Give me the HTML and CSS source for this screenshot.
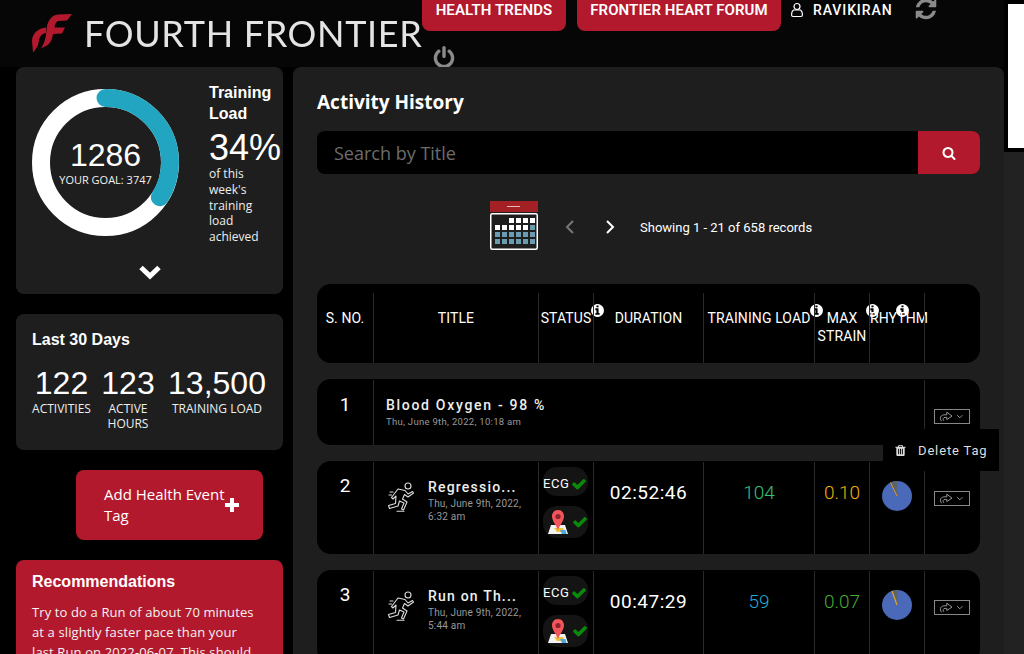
FILE: index.html
```html
<!DOCTYPE html>
<html lang="en">
<head>
  <meta charset="UTF-8">
  <title>Fourth Frontier - Activity History</title>
  <link rel="stylesheet" href="styles.css">
</head>
<body>
  <svg class="icon-defs" width="0" height="0">
    <symbol id="i-refresh" viewBox="0 0 1792 1792"><path d="M1639 1056q0 5-1 7-64 268-268 434.5t-478 166.5q-146 0-282.5-55t-243.5-157l-129 129q-19 19-45 19t-45-19-19-45v-448q0-26 19-45t45-19h448q26 0 45 19t19 45-19 45l-137 137q71 66 161 102t187 36q134 0 250-65t186-179q11-17 53-117 8-23 30-23h192q13 0 22.5 9.5t9.5 22.5zm25-800v448q0 26-19 45t-45 19h-448q-26 0-45-19t-19-45 19-45l138-138q-148-137-349-137-134 0-250 65t-186 179q-11 17-53 117-8 23-30 23h-199q-13 0-22.5-9.5t-9.5-22.5v-7q65-268 270-434.5t480-166.5q146 0 284 55.5t245 156.5l130-129q19-19 45-19t45 19 19 45z"/></symbol>
    <symbol id="i-power" viewBox="0 0 1792 1792"><path d="M1664 896q0 156-61 298t-164 245-245 164-298 61-298-61-245-164-164-245-61-298q0-182 80.5-343t226.5-270q43-32 95.5-25t83.5 50q32 42 24.5 94.5t-49.5 84.5q-98 74-151.5 181t-53.5 228q0 104 40.5 198.5t109.5 163.5 163.5 109.5 198.5 40.5 198.5-40.5 163.5-109.5 109.5-163.5 40.5-198.5q0-121-53.5-228t-151.5-181q-42-32-49.5-84.5t24.5-94.5q31-43 84-50t95 25q146 109 226.5 270t80.5 343zm-640-768v640q0 52-38 90t-90 38-90-38-38-90v-640q0-52 38-90t90-38 90 38 38 90z"/></symbol>
    <symbol id="i-search" viewBox="0 0 1792 1792"><path d="M1216 832q0-185-131.5-316.5t-316.5-131.5-316.5 131.5-131.5 316.5 131.5 316.5 316.5 131.5 316.5-131.5 131.5-316.5zm512 832q0 52-38 90t-90 38q-54 0-90-38l-343-342q-179 124-399 124-143 0-273.5-55.5t-225-150-150-225-55.5-273.5 55.5-273.5 150-225 225-150 273.5-55.5 273.5 55.5 225 150 150 225 55.5 273.5q0 220-124 399l343 343q37 37 37 90z"/></symbol>
    <symbol id="i-info" viewBox="0 0 1792 1792"><path d="M1152 1376v-160q0-14-9-23t-23-9h-96v-512q0-14-9-23t-23-9h-320q-14 0-23 9t-9 23v160q0 14 9 23t23 9h96v320h-96q-14 0-23 9t-9 23v160q0 14 9 23t23 9h448q14 0 23-9t9-23zm-128-896v-160q0-14-9-23t-23-9h-192q-14 0-23 9t-9 23v160q0 14 9 23t23 9h192q14 0 23-9t9-23zm640 416q0 209-103 385.5t-279.5 279.5-385.5 103-385.5-103-279.5-279.5-103-385.5 103-385.5 279.5-279.5 385.5-103 385.5 103 279.5 279.5 103 385.5z"/></symbol>
    <symbol id="i-check" viewBox="0 0 1792 1792"><path d="M1671 566q0 40-28 68l-724 724-136 136q-28 28-68 28t-68-28l-136-136-362-362q-28-28-28-68t28-68l136-136q28-28 68-28t68 28l294 295 656-657q28-28 68-28t68 28l136 136q28 28 28 68z"/></symbol>
    <symbol id="i-trash" viewBox="0 0 1792 1792"><path d="M704 1376v-704q0-14-9-23t-23-9h-64q-14 0-23 9t-9 23v704q0 14 9 23t23 9h64q14 0 23-9t9-23zm256 0v-704q0-14-9-23t-23-9h-64q-14 0-23 9t-9 23v704q0 14 9 23t23 9h64q14 0 23-9t9-23zm256 0v-704q0-14-9-23t-23-9h-64q-14 0-23 9t-9 23v704q0 14 9 23t23 9h64q14 0 23-9t9-23zm-544-992h448l-48-117q-7-9-17-11h-317q-10 2-17 11zm928 32v64q0 14-9 23t-23 9h-96v948q0 83-47 143.5t-113 60.5h-832q-66 0-113-58.5t-47-141.5v-952h-96q-14 0-23-9t-9-23v-64q0-14 9-23t23-9h309l70-167q15-37 54-63t79-26h320q40 0 79 26t54 63l70 167h309q14 0 23 9t9 23z"/></symbol>
    <symbol id="i-share" viewBox="0 0 36 15">
      <path d="M6 13 C3 9 5 5.500 10 5.500 H12 V2.500 L18 7 L12 11 V8.500 H10 C8 8.500 7 10 8.500 12.500" fill="none" stroke="#aaa" stroke-width="1"/>
      <path d="M24 6 L27 9 L30 6" fill="none" stroke="#aaa" stroke-width="1"/>
    </symbol>
    <symbol id="i-runner" viewBox="0 0 26 30">
      <g fill="none" stroke="#ddd" stroke-width="1.100" stroke-linejoin="round" stroke-linecap="round">
        <circle cx="20" cy="4" r="3"/>
        <path d="M10 7 L17 8.500 L20 12 L24.500 9.500 L25.500 11 L20 15 L16.500 12.500 L14.500 17 L19 20 L15.500 28 L13.500 27 L16 21 L11.500 19 L10 24 L1.500 26.500 L0.500 23.500 L7.500 21.500 L8 14 L5 17 L3.500 15.500 Z"/>
        <path d="M9 29.300 H16 M2 10 H5 M1 13 H3.500"/>
      </g>
    </symbol>
    <symbol id="i-map" viewBox="0 0 20 25">
      <path d="M3 15 H17 L20 24 H0 Z" fill="#f3f3f3"/>
      <path d="M6 18 H15 L17 22 H9 Z" fill="#f2c23a"/>
      <path d="M12 20 H17.500 L18.500 24 H14 Z" fill="#4fa8dc"/>
      <path d="M10 0 C5.500 0 4 3.500 4 6.500 C4 10.500 8 15 10 20 C12 15 16 10.500 16 6.500 C16 3.500 14.500 0 10 0 Z" fill="#f2555a"/>
      <circle cx="10" cy="6.500" r="2.600" fill="#8c2430"/>
    </symbol>
  </svg>

  <div class="app">
    <div class="page">
      <header class="topbar">
        <div class="brand">
          <svg class="brand-mark" viewBox="0 0 40 40" width="40" height="40">
            <path fill="#b2192d" d="M40 0 L35 6.500 L26 7 C24 8 23 10 22.500 13.500 L33 13.500 L30 19.500 L21 20 C20 26 18 32 9 34 C13 29 14 22 14.500 16 C15 8 19 1 26 0.500 Z"/>
            <path fill="#b2192d" d="M1 38.500 L0 27 C0 20 6 14 14 13.500 L14 19 C10 19.500 8 22 7 26 C6.500 30 6 33 1 38.500 Z"/>
          </svg>
          <span class="brand-name">FOURTH FRONTIER</span>
        </div>
        <nav class="topnav">
          <a class="nav-btn nav-health">HEALTH TRENDS</a>
          <a class="nav-btn nav-forum">FRONTIER HEART FORUM</a>
          <span class="user">
            <svg class="user-icon" viewBox="0 0 12 16" width="12" height="16"><circle cx="6" cy="4.500" r="3" fill="none" stroke="#fff" stroke-width="1.200"/><path d="M2.500 8 H9.500 C10.800 9 11.400 10.500 11.400 12 V13 C11.400 14 10.800 14.500 10 14.500 H2 C1.200 14.500 0.600 14 0.600 13 V12 C0.600 10.500 1.200 9 2.500 8 Z" fill="none" stroke="#fff" stroke-width="1.200"/></svg>
            RAVIKIRAN
          </span>
          <svg class="refresh-icon"><use href="#i-refresh"/></svg>
          <svg class="power-icon"><use href="#i-power"/></svg>
        </nav>
      </header>

      <div class="content">
        <aside class="sidebar">
          <section class="card load-card">
            <div class="load-top">
              <div class="ring">
                <svg viewBox="0 0 147 147" width="147" height="147">
                  <circle cx="73.500" cy="73.500" r="64.500" fill="none" stroke="#fff" stroke-width="18"/>
                  <circle cx="73.500" cy="73.500" r="64.500" fill="none" stroke="#22a5c0" stroke-width="18" stroke-linecap="round" stroke-dasharray="137.800 405.300" transform="rotate(-90 73.500 73.500)"/>
                </svg>
                <div class="ring-text">
                  <div class="ring-value">1286</div>
                  <div class="ring-goal">YOUR GOAL: 3747</div>
                </div>
              </div>
              <div class="load-info">
                <h3 class="card-title">Training Load</h3>
                <div class="load-pct">34%</div>
                <p class="load-note">of this week's training load achieved</p>
              </div>
            </div>
            <svg class="chevron-down" viewBox="0 0 24 16" width="24" height="16"><path d="M3 3.500 L12 12 L21 3.500" fill="none" stroke="#fff" stroke-width="5"/></svg>
          </section>

          <section class="card days-card">
            <h3 class="card-title">Last 30 Days</h3>
            <div class="days-stats">
              <div class="stat stat-a"><div class="stat-value">122</div><div class="stat-label">ACTIVITIES</div></div>
              <div class="stat stat-b"><div class="stat-value">123</div><div class="stat-label">ACTIVE HOURS</div></div>
              <div class="stat stat-c"><div class="stat-value">13,500</div><div class="stat-label">TRAINING LOAD</div></div>
            </div>
          </section>

          <a class="add-btn">
            <span>Add Health Event Tag</span>
            <svg class="add-plus" viewBox="0 0 14 14" width="14" height="14"><path d="M5 0 H9 V5 H14 V9 H9 V14 H5 V9 H0 V5 H5 Z" fill="#fff"/></svg>
          </a>

          <section class="card reco-card">
            <h3 class="card-title">Recommendations</h3>
            <p class="reco-text">Try to do a Run of about 70 minutes at a slightly faster pace than your last Run on 2022-06-07. This should help you build on your load.</p>
          </section>
        </aside>

        <main class="history">
          <h2 class="history-title">Activity History</h2>
          <div class="search">
            <div class="search-input">Search by Title</div>
            <div class="search-btn"><svg><use href="#i-search"/></svg></div>
          </div>
          <div class="pager">
            <svg class="calendar" viewBox="0 0 48 49" width="48" height="49">
              <rect x="0" y="0" width="48" height="11" fill="#a32025"/>
              <rect x="17" y="5" width="13" height="1" fill="#e8b9bb"/>
              <rect x="0.750" y="12.750" width="46.500" height="35.500" rx="1.500" fill="none" stroke="#fff" stroke-width="1.500"/>
              <g fill="#fff">
                <rect x="19" y="17" width="5" height="5"/><rect x="26" y="17" width="5" height="5"/><rect x="33" y="17" width="5" height="5"/><rect x="40" y="17" width="5" height="5"/>
                <rect x="5" y="24" width="5" height="5"/><rect x="12" y="24" width="5" height="5"/><rect x="19" y="24" width="5" height="5"/><rect x="26" y="24" width="5" height="5"/><rect x="33" y="24" width="5" height="5"/>
              </g>
              <g fill="#6b9bb0">
                <rect x="40" y="24" width="5" height="5"/>
                <rect x="5" y="31" width="5" height="5"/><rect x="12" y="31" width="5" height="5"/><rect x="19" y="31" width="5" height="5"/><rect x="26" y="31" width="5" height="5"/><rect x="33" y="31" width="5" height="5"/><rect x="40" y="31" width="5" height="5"/>
                <rect x="5" y="38" width="5" height="5"/><rect x="12" y="38" width="5" height="5"/><rect x="19" y="38" width="5" height="5"/><rect x="26" y="38" width="5" height="5"/><rect x="33" y="38" width="5" height="5"/><rect x="40" y="38" width="5" height="5"/>
              </g>
            </svg>
            <svg class="pager-arrow" viewBox="0 0 10 14" width="10" height="14"><path d="M8 1 L2 7 L8 13" fill="none" stroke="#777" stroke-width="2"/></svg>
            <svg class="pager-arrow" viewBox="0 0 10 14" width="10" height="14"><path d="M2 1 L8 7 L2 13" fill="none" stroke="#fff" stroke-width="2"/></svg>
            <span class="pager-text">Showing 1 - 21 of 658 records</span>
          </div>

          <div class="table">
            <div class="row row-head">
              <div class="cell">S. NO.</div>
              <div class="cell">TITLE</div>
              <div class="cell">STATUS<svg class="info info-status"><use href="#i-info"/></svg></div>
              <div class="cell">DURATION</div>
              <div class="cell">TRAINING LOAD<svg class="info info-load"><use href="#i-info"/></svg></div>
              <div class="cell">MAX STRAIN<svg class="info info-strain"><use href="#i-info"/></svg></div>
              <div class="cell">RHYTHM<svg class="info info-rhythm"><use href="#i-info"/></svg></div>
              <div class="cell"></div>
            </div>

            <div class="row row-tag">
              <div class="cell cell-num">1</div>
              <div class="cell cell-tag">
                <div class="tag-title">Blood Oxygen - 98 %</div>
                <div class="tag-date">Thu, June 9th, 2022, 10:18 am</div>
              </div>
              <div class="cell cell-share"><svg class="share"><use href="#i-share"/></svg></div>
            </div>

            <div class="row row-activity">
              <div class="cell cell-num">2</div>
              <div class="cell cell-title">
                <svg class="runner"><use href="#i-runner"/></svg>
                <div>
                  <div class="act-title">Regressio...</div>
                  <div class="act-date">Thu, June 9th, 2022, 6:32 am</div>
                </div>
              </div>
              <div class="cell cell-status">
                <div class="chip">ECG<svg class="check"><use href="#i-check"/></svg></div>
                <div class="chip chip-map"><svg class="map"><use href="#i-map"/></svg><svg class="check"><use href="#i-check"/></svg></div>
              </div>
              <div class="cell cell-big">02:52:46</div>
              <div class="cell cell-big cell-metric c-green">104</div>
              <div class="cell cell-big cell-metric c-amber">0.10</div>
              <div class="cell cell-pie">
                <svg viewBox="0 0 30 30" width="30" height="30"><circle cx="15" cy="15" r="15" fill="#4a69b8"/><path d="M15 15 L8.500 1.500 A15 15 0 0 1 15.500 0 Z" fill="#5d6468"/><path d="M15 15 L8.500 1.500" stroke="#e0952a" stroke-width="1"/></svg>
              </div>
              <div class="cell cell-share"><svg class="share"><use href="#i-share"/></svg></div>
            </div>

            <div class="row row-activity">
              <div class="cell cell-num">3</div>
              <div class="cell cell-title">
                <svg class="runner"><use href="#i-runner"/></svg>
                <div>
                  <div class="act-title">Run on Th...</div>
                  <div class="act-date">Thu, June 9th, 2022, 5:44 am</div>
                </div>
              </div>
              <div class="cell cell-status">
                <div class="chip">ECG<svg class="check"><use href="#i-check"/></svg></div>
                <div class="chip chip-map"><svg class="map"><use href="#i-map"/></svg><svg class="check"><use href="#i-check"/></svg></div>
              </div>
              <div class="cell cell-big">00:47:29</div>
              <div class="cell cell-big cell-metric c-blue">59</div>
              <div class="cell cell-big cell-metric c-lime">0.07</div>
              <div class="cell cell-pie">
                <svg viewBox="0 0 30 30" width="30" height="30"><circle cx="15" cy="15" r="15" fill="#4a69b8"/><path d="M15 15 L10 1 A15 15 0 0 1 15.500 0 Z" fill="#5d6468"/><path d="M15 15 L10 1" stroke="#e0a52a" stroke-width="1.200"/></svg>
              </div>
              <div class="cell cell-share"><svg class="share"><use href="#i-share"/></svg></div>
            </div>

            <!-- open share menu -->
            <div class="tag-menu">
              <svg><use href="#i-trash"/></svg>
              <span>Delete Tag</span>
            </div>
          </div>
        </main>
      </div>
    </div>

    <div class="scrollbar"><div class="scroll-thumb"></div></div>
  </div>
</body>
</html>
```

FILE: styles.css
```css
/* Global reset */
* {
  margin: 0;
  padding: 0;
  box-sizing: border-box;
}

html, body {
  height: 100%;
  overflow: hidden;
}

body {
  background: #000;
  color: #fff;
  font-family: "Open Sans", sans-serif;
}

.icon-defs {
  position: absolute;
}

.app {
  display: flex;
  height: 654px;
  overflow: hidden;
}

.page {
  width: 1004px;
  flex: none;
}

/* Scrollbar */
.scrollbar {
  flex: 1;
  background: #222;
}

.scroll-thumb {
  height: 152px;
  background: #000;
  padding: 4px 0 4px 4px;
}

.scroll-thumb::before {
  content: "";
  display: block;
  height: 144px;
  background: #fff;
}

/* Top bar */
.topbar {
  display: flex;
  height: 67px;
  background: #060606;
}

.brand {
  display: flex;
  align-items: flex-start;
  width: 422px;
  flex: none;
  padding: 14px 0 0 32px;
}

.brand-mark {
  flex: none;
}

.brand-name {
  margin: -1px 0 0 12px;
  font-family: Lato, sans-serif;
  font-size: 36px;
  line-height: 40px;
  letter-spacing: 0.65px;
  color: #e4e4e4;
  white-space: nowrap;
  filter: blur(0.4px);
}

.topnav {
  display: flex;
  flex-wrap: wrap;
  align-items: flex-start;
  align-content: flex-start;
  width: 540px;
}

.nav-btn {
  height: 31px;
  padding: 0 12px;
  background: #b2192d;
  border-radius: 0 0 8px 8px;
  font-family: Roboto, sans-serif;
  font-size: 15px;
  font-weight: 600;
  line-height: 20px;
  letter-spacing: 0.1px;
  white-space: nowrap;
}

.nav-health {
  width: 144px;
  text-align: center;
}

.nav-forum {
  width: 204px;
  margin-left: 11px;
  text-align: center;
}

.user {
  display: flex;
  align-items: flex-start;
  margin-left: 10px;
  font-family: Roboto, sans-serif;
  font-size: 14px;
  font-weight: 500;
  line-height: 20px;
  letter-spacing: 0.9px;
}

.user-icon {
  margin: 2px 10px 0 0;
}

.refresh-icon {
  width: 24px;
  height: 24px;
  margin: -3px 0 0 22px;
  fill: #8a8a8a;
}

.power-icon {
  width: 24px;
  height: 24px;
  margin: 15px 0 0 10px;
  fill: #8a8a8a;
}

/* Sidebar + main */
.content {
  display: flex;
}

.sidebar {
  width: 293px;
  flex: none;
  padding: 0 10px 0 16px;
}

.card {
  background: #1e1e1e;
  border-radius: 8px;
}

.card-title {
  font-family: "Liberation Sans", sans-serif;
  font-size: 16px;
  font-weight: 700;
  line-height: 21px;
}

.load-card {
  height: 227px;
  padding: 15px 0 0 16px;
  text-align: center;
}

.load-top {
  display: flex;
  text-align: left;
}

.ring {
  display: grid;
  width: 147px;
  height: 147px;
  margin-top: 7px;
  flex: none;
}

.ring > * {
  grid-area: 1 / 1;
}

.ring-text {
  padding-top: 49px;
  text-align: center;
}

.ring-value {
  font-family: "Liberation Sans", sans-serif;
  font-size: 32px;
  line-height: 34px;
}

.ring-goal {
  font-family: "Open Sans", sans-serif;
  font-size: 11px;
  line-height: 15px;
  color: #f2f2f2;
}

.load-info {
  width: 72px;
  margin-left: 30px;
}

.load-pct {
  margin-top: 6px;
  font-family: "Liberation Sans", sans-serif;
  font-size: 36px;
  line-height: 36px;
  white-space: nowrap;
}

.load-note {
  width: 60px;
  font-size: 12px;
  line-height: 15.8px;
  color: #eee;
}

.chevron-down {
  display: block;
  margin: 19px 0 0 106px;
}

.days-card {
  height: 136px;
  margin-top: 20px;
  padding: 15px 16px 0;
}

.days-stats {
  display: flex;
  margin-top: 15px;
  text-align: center;
}

.stat-value {
  font-family: "Liberation Sans", sans-serif;
  font-size: 32px;
  line-height: 36px;
}

.stat-label {
  font-size: 12px;
  line-height: 15px;
  color: #eee;
}

.stat-a {
  width: 59px;
}

.stat-b {
  width: 56px;
  margin-left: 9px;
}

.stat-c {
  width: 100px;
  margin-left: 11px;
}

.add-btn {
  display: flex;
  width: 187px;
  height: 70px;
  margin: 20px 0 0 60px;
  padding: 14px 28px;
  position: relative;
  background: #b2192d;
  border-radius: 8px;
  font-size: 15px;
  line-height: 21px;
}

.add-plus {
  position: absolute;
  left: 149px;
  top: 28px;
}

.reco-card {
  height: 200px;
  margin-top: 20px;
  padding: 11px 16px 0;
  background: #b2192d;
}

.reco-text {
  width: 224px;
  margin-top: 10px;
  font-size: 13px;
  line-height: 20px;
  letter-spacing: 0.12px;
  color: #f3f3f3;
}

/* Activity history */
.history {
  width: 711px;
  height: 800px;
  padding: 0 24px;
  background: #1e1e1e;
  border-radius: 8px 8px 0 0;
}

.history-title {
  padding-top: 22px;
  font-family: "Open Sans", sans-serif;
  font-size: 19px;
  font-weight: 700;
  line-height: 26px;
}

.search {
  display: flex;
  height: 43px;
  margin-top: 16px;
  background: #000;
  border-radius: 8px;
  overflow: hidden;
}

.search-input {
  flex: 1;
  padding-left: 17px;
  font-size: 18px;
  line-height: 44px;
  color: #6c6c6c;
}

.search-btn {
  display: flex;
  width: 62px;
  align-items: center;
  justify-content: center;
  background: #b2192d;
}

.search-btn svg {
  width: 14px;
  height: 14px;
  fill: #fff;
}

.pager {
  display: flex;
  align-items: center;
  height: 49px;
  margin-top: 27px;
  padding-left: 173px;
}

.pager-arrow {
  margin: 3px 0 0 27px;
}

.pager-arrow + .pager-arrow {
  margin-left: 30px;
}

.pager-text {
  margin: 3px 0 0 25px;
  font-family: Roboto, sans-serif;
  font-size: 13px;
}

/* Table rows */
.table {
  position: relative;
  margin-top: 34px;
}

.row {
  display: grid;
  grid-template-columns: 56px 165px 55px 110px 111px 55px 55px 56px;
  margin-bottom: 16px;
  background: #000;
  border-radius: 14px;
  font-family: Roboto, sans-serif;
}

.cell {
  position: relative;
  border-left: 1px solid #2a2a2a;
  text-align: center;
}

.cell:first-child {
  border-left: 0;
}

.row-head {
  height: 79px;
  padding-top: 9px;
  font-size: 14px;
  line-height: 18px;
  letter-spacing: 0.1px;
}

.row-head .cell {
  padding-top: 16px;
}

.info {
  position: absolute;
  top: 9.500px;
  width: 15px;
  height: 15px;
  fill: #fff;
}

.info-status { left: 50.500px; }
.info-load { left: 105px; }
.info-strain { left: 50px; }
.info-rhythm { left: 25px; }

.row-tag {
  grid-template-columns: 56px 551px 56px;
  height: 66px;
  padding-top: 1px;
}

.cell-num {
  padding-top: 13px;
  font-size: 19px;
  line-height: 24px;
}

.cell-tag {
  padding: 15px 0 0 12px;
  text-align: left;
}

.tag-title {
  font-size: 14px;
  font-weight: 500;
  line-height: 20px;
  letter-spacing: 1.7px;
  color: #eee;
}

.tag-date {
  font-size: 9.500px;
  line-height: 14px;
  letter-spacing: 0.3px;
  color: #999;
}

.share {
  display: block;
  width: 36px;
  height: 15px;
  border: 1px solid #888;
}

.cell-share {
  padding: 29px 0 0 9px;
}

.row-activity {
  height: 93px;
  padding-top: 1px;
}

.row-activity .cell-num {
  padding-top: 12px;
}

.cell-title {
  display: flex;
  gap: 14px;
  padding: 15px 0 0 14px;
  text-align: left;
}

.runner {
  width: 26px;
  height: 30px;
  margin-top: 5px;
  flex: none;
}

.act-title {
  font-size: 14px;
  font-weight: 500;
  line-height: 20px;
  letter-spacing: 1.2px;
  color: #eee;
  white-space: nowrap;
}

.act-date {
  width: 104px;
  font-size: 10px;
  line-height: 13px;
  letter-spacing: 0.2px;
  color: #999;
}

.cell-status {
  padding: 5px 0 0 4px;
}

.chip {
  display: flex;
  align-items: center;
  width: 45px;
  height: 29px;
  padding-top: 4px;
  background: #141414;
  border-radius: 14px;
  font-size: 13px;
  letter-spacing: 0.6px;
}

.chip-map {
  height: 32px;
  margin-top: 10px;
  padding: 0 0 0 5px;
}

.map {
  width: 20px;
  height: 25px;
}

.check {
  width: 16px;
  height: 16px;
  margin-left: 1px;
  fill: #0a8a0a;
}

.chip-map .check {
  margin-left: 4px;
}

.cell-big {
  padding-top: 19px;
  font-size: 19px;
  line-height: 24px;
  letter-spacing: 0.5px;
}

.cell-metric {
  font-weight: 300;
  letter-spacing: 0;
}

.c-green { color: #30c47c; }
.c-amber { color: #f2b00c; }
.c-blue { color: #22aad0; }
.c-lime { color: #46ae34; }

.cell-pie {
  padding: 19px 0 0 12px;
  text-align: left;
}

/* Share dropdown */
.tag-menu {
  position: absolute;
  left: 566px;
  top: 145px;
  display: flex;
  align-items: center;
  width: 116px;
  height: 42px;
  padding-left: 11px;
  background: #000;
  font-family: Roboto, sans-serif;
  font-size: 13px;
  letter-spacing: 0.85px;
  color: #ddd;
}

.tag-menu svg {
  width: 13px;
  height: 13px;
  margin-right: 11px;
  fill: #ddd;
}
```
